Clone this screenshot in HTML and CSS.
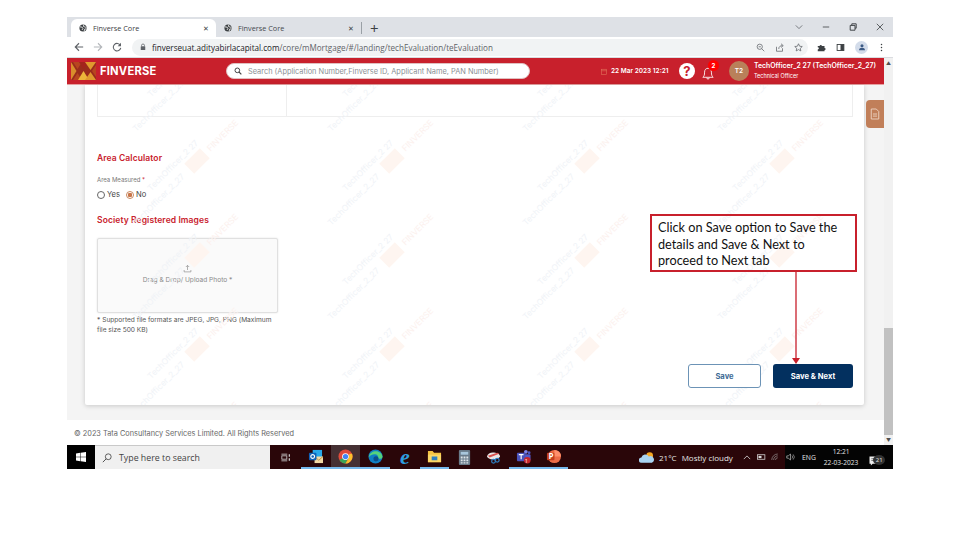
FILE: index.html
```html
<!DOCTYPE html>
<html lang="en">
<head>
    <meta charset="UTF-8">
    <title>Finverse Core</title>
    <link rel="stylesheet" href="styles.css">
</head>
<body>
    <div class="screen">
        <div class="tabstrip">
            <div class="tab active">
                <svg class="globe" viewBox="0 0 10 10"><circle cx="5" cy="5" r="4.5" fill="#3c4043"/><path d="M1 3.5 4 4l1 2-1.5 1.5M6 1l-.5 2 2.5 1 1 0M6.5 9 7 6.5l2-.5" fill="none" stroke="#fff" stroke-width="1"/></svg>
                <span class="tab-title">Finverse Core</span>
                <span class="tab-close">&#10005;</span>
            </div>
            <div class="tab">
                <svg class="globe" viewBox="0 0 10 10"><circle cx="5" cy="5" r="4.5" fill="#3c4043"/><path d="M1 3.5 4 4l1 2-1.5 1.5M6 1l-.5 2 2.5 1 1 0M6.5 9 7 6.5l2-.5" fill="none" stroke="#fff" stroke-width="1"/></svg>
                <span class="tab-title">Finverse Core</span>
                <span class="tab-close">&#10005;</span>
            </div>
            <span class="tab-new">+</span>
            <div class="win-controls">
                <svg viewBox="0 0 10 10"><path d="M1 3l4 4 4-4" fill="none" stroke="#5f6368" stroke-width="1"/></svg>
                <svg viewBox="0 0 10 10"><path d="M1 5h8" stroke="#3c4043" stroke-width="1"/></svg>
                <svg viewBox="0 0 10 10"><path d="M1.5 3h6v6h-6zM3.5 3V1h5.5v5.5H7.5" fill="none" stroke="#3c4043" stroke-width="1.2"/></svg>
                <svg viewBox="0 0 10 10"><path d="M1 1l8 8M9 1l-8 8" stroke="#3c4043" stroke-width="1"/></svg>
            </div>
        </div>

        <div class="toolbar">
            <div class="nav-btns">
                <svg viewBox="0 0 12 12"><path d="M11 6H2M6 1.5 1.5 6 6 10.5" fill="none" stroke="#5f6368" stroke-width="1.3"/></svg>
                <svg viewBox="0 0 12 12"><path d="M1 6h9M6 1.5 10.5 6 6 10.5" fill="none" stroke="#b4b7bb" stroke-width="1.3"/></svg>
                <svg viewBox="0 0 12 12"><path d="M10 4a4.5 4.5 0 1 0 .5 3" fill="none" stroke="#5f6368" stroke-width="1.3"/><path d="M10.8 1v4h-4z" fill="#5f6368"/></svg>
            </div>
            <div class="omnibox">
                <svg class="lock" viewBox="0 0 8 10"><path d="M2 4V3a2 2 0 0 1 4 0v1" fill="none" stroke="#5f6368"/><rect x="1" y="4" width="6" height="5" rx=".5" fill="#5f6368"/></svg>
                <span class="url"><b>finverseuat.adityabirlacapital.com</b>/core/mMortgage/#/landing/techEvaluation/teEvaluation</span>
                <div class="omni-icons">
                    <svg viewBox="0 0 12 12"><circle cx="5" cy="5" r="3.5" fill="none" stroke="#5f6368"/><path d="M7.5 7.5 11 11M3.5 5h3" stroke="#5f6368"/></svg>
                    <svg viewBox="0 0 12 12"><path d="M2 5v6h8V7M5 8c0-3 2-4.5 5-4.5M8 1l3 2.5L8 6" fill="none" stroke="#5f6368"/></svg>
                    <svg viewBox="0 0 12 12"><path d="M6 1l1.5 3.3 3.5.4-2.6 2.4.7 3.5L6 8.8l-3.1 1.8.7-3.5L1 4.7l3.5-.4z" fill="none" stroke="#5f6368"/></svg>
                </div>
            </div>
            <div class="chrome-icons">
                <svg viewBox="0 0 12 12"><path d="M1 4h2.5a1.500 1.500 0 0 1 3 0H10v2.500a1.500 1.500 0 0 1 0 3V11H1V8.500a1.500 1.500 0 0 0 0-3z" fill="#3c4043"/></svg>
                <svg viewBox="0 0 12 12"><rect x="1.5" y="2" width="9" height="8" fill="none" stroke="#3c4043" stroke-width="1.2"/><rect x="6" y="2" width="4.5" height="8" fill="#3c4043"/></svg>
                <span class="profile"><svg viewBox="0 0 12 12"><circle cx="6" cy="4" r="2.3" fill="#3c5a84"/><path d="M1.5 11c0-3 2-4 4.5-4s4.5 1 4.5 4z" fill="#3c5a84"/></svg></span>
                <svg viewBox="0 0 12 12"><circle cx="6" cy="2" r="1" fill="#3c4043"/><circle cx="6" cy="6" r="1" fill="#3c4043"/><circle cx="6" cy="10" r="1" fill="#3c4043"/></svg>
            </div>
        </div>

        <div class="app">
            <div class="app-main">
                <header class="apphead">
                    <div class="brand">
                        <svg class="brand-logo" viewBox="0 0 25 18"><rect width="25" height="18" fill="#9a2c1c"/><path d="M0 0 5.5 9 0 18z" fill="#d98e2c"/><path d="M2 0h9L6.5 7zM2 18h9l-4.5-7z" fill="#b8451f"/><path d="M7 18l5.5-9 5.500 9z" fill="#ecb63a"/><path d="M8 0h9l-4.500 7z" fill="#a3241d"/><path d="M14 0h11l-5.500 8zM14 18h11l-5.500-8z" fill="#e0992e"/><path d="M25 3v12l-4-6z" fill="#b8451f"/></svg>
                        <span class="brand-name">FINVERSE</span>
                    </div>
                    <div class="search">
                        <svg viewBox="0 0 12 12"><circle cx="5" cy="5" r="3.5" fill="none" stroke="#444" stroke-width="1.5"/><path d="M7.5 7.5 11 11" stroke="#444" stroke-width="1.7"/></svg>
                        <span>Search (Application Number,Finverse ID, Applicant Name, PAN Number)</span>
                    </div>
                    <div class="head-date">
                        <svg viewBox="0 0 8 9"><rect x=".5" y="1.5" width="7" height="7" fill="none" stroke="#e2725b" stroke-width=".8"/><path d="M.5 3.5h7" stroke="#e2725b" stroke-width=".8"/></svg>
                        <span>22 Mar 2023 12:21</span>
                    </div>
                    <span class="help">?</span>
                    <div class="bell">
                        <svg viewBox="0 0 14 16"><path d="M1 13c1.5-1.500 2-2.500 2-6 0-3 1.800-4.500 4-4.500S11 4 11 7c0 3.500.5 4.500 2 6zM5.500 13.500a1.500 1.500 0 0 0 3 0" fill="none" stroke="#fff" stroke-width="1"/></svg>
                        <span class="badge">2</span>
                    </div>
                    <span class="avatar">T2</span>
                    <div class="user">
                        <div class="user-name">TechOfficer_2 27 (TechOfficer_2_27)</div>
                        <div class="user-role">Technical Officer</div>
                    </div>
                </header>

                <div class="content">
                    <div class="card">
                        <div class="wm-layer">
                            <div class="wm-cell"><div class="wm"><span class="wm-one">TechOfficer_2 27</span><div class="wm-two"><span>TechOfficer_2_27</span><i></i><em>FINVERSE</em></div></div></div>
                            <div class="wm-cell"><div class="wm"><span class="wm-one">TechOfficer_2 27</span><div class="wm-two"><span>TechOfficer_2_27</span><i></i><em>FINVERSE</em></div></div></div>
                            <div class="wm-cell"><div class="wm"><span class="wm-one">TechOfficer_2 27</span><div class="wm-two"><span>TechOfficer_2_27</span><i></i><em>FINVERSE</em></div></div></div>
                            <div class="wm-cell"><div class="wm"><span class="wm-one">TechOfficer_2 27</span><div class="wm-two"><span>TechOfficer_2_27</span><i></i><em>FINVERSE</em></div></div></div>
                            <div class="wm-cell"><div class="wm"><span class="wm-one">TechOfficer_2 27</span><div class="wm-two"><span>TechOfficer_2_27</span><i></i><em>FINVERSE</em></div></div></div>
                            <div class="wm-cell"><div class="wm"><span class="wm-one">TechOfficer_2 27</span><div class="wm-two"><span>TechOfficer_2_27</span><i></i><em>FINVERSE</em></div></div></div>
                            <div class="wm-cell"><div class="wm"><span class="wm-one">TechOfficer_2 27</span><div class="wm-two"><span>TechOfficer_2_27</span><i></i><em>FINVERSE</em></div></div></div>
                            <div class="wm-cell"><div class="wm"><span class="wm-one">TechOfficer_2 27</span><div class="wm-two"><span>TechOfficer_2_27</span><i></i><em>FINVERSE</em></div></div></div>
                            <div class="wm-cell"><div class="wm"><span class="wm-one">TechOfficer_2 27</span><div class="wm-two"><span>TechOfficer_2_27</span><i></i><em>FINVERSE</em></div></div></div>
                            <div class="wm-cell"><div class="wm"><span class="wm-one">TechOfficer_2 27</span><div class="wm-two"><span>TechOfficer_2_27</span><i></i><em>FINVERSE</em></div></div></div>
                            <div class="wm-cell"><div class="wm"><span class="wm-one">TechOfficer_2 27</span><div class="wm-two"><span>TechOfficer_2_27</span><i></i><em>FINVERSE</em></div></div></div>
                            <div class="wm-cell"><div class="wm"><span class="wm-one">TechOfficer_2 27</span><div class="wm-two"><span>TechOfficer_2_27</span><i></i><em>FINVERSE</em></div></div></div>
                            <div class="wm-cell"><div class="wm"><span class="wm-one">TechOfficer_2 27</span><div class="wm-two"><span>TechOfficer_2_27</span><i></i><em>FINVERSE</em></div></div></div>
                            <div class="wm-cell"><div class="wm"><span class="wm-one">TechOfficer_2 27</span><div class="wm-two"><span>TechOfficer_2_27</span><i></i><em>FINVERSE</em></div></div></div>
                            <div class="wm-cell"><div class="wm"><span class="wm-one">TechOfficer_2 27</span><div class="wm-two"><span>TechOfficer_2_27</span><i></i><em>FINVERSE</em></div></div></div>
                            <div class="wm-cell"><div class="wm"><span class="wm-one">TechOfficer_2 27</span><div class="wm-two"><span>TechOfficer_2_27</span><i></i><em>FINVERSE</em></div></div></div>
                            <div class="wm-cell"><div class="wm"><span class="wm-one">TechOfficer_2 27</span><div class="wm-two"><span>TechOfficer_2_27</span><i></i><em>FINVERSE</em></div></div></div>
                            <div class="wm-cell"><div class="wm"><span class="wm-one">TechOfficer_2 27</span><div class="wm-two"><span>TechOfficer_2_27</span><i></i><em>FINVERSE</em></div></div></div>
                            <div class="wm-cell"><div class="wm"><span class="wm-one">TechOfficer_2 27</span><div class="wm-two"><span>TechOfficer_2_27</span><i></i><em>FINVERSE</em></div></div></div>
                            <div class="wm-cell"><div class="wm"><span class="wm-one">TechOfficer_2 27</span><div class="wm-two"><span>TechOfficer_2_27</span><i></i><em>FINVERSE</em></div></div></div>
                        </div>

                        <div class="top-table"><div class="top-cell"></div></div>

                        <h3 class="section-title area-title">Area Calculator</h3>
                        <div class="field-label">Area Measured <span class="req">*</span></div>
                        <div class="radios">
                            <label><span class="radio"></span>Yes</label>
                            <label><span class="radio checked"></span>No</label>
                        </div>

                        <h3 class="section-title images-title">Society Registered Images</h3>
                        <div class="upload">
                            <svg viewBox="0 0 12 12"><path d="M1.5 8v2.5h9V8M6 8V2M3.8 4 6 1.8 8.2 4" fill="none" stroke="#8a8a8a" stroke-width=".9"/></svg>
                            <span>Drag &amp; Drop/ Upload Photo *</span>
                        </div>
                        <p class="upload-note">* Supported file formats are JPEG, JPG, PNG (Maximum file size 500 KB)</p>

                        <div class="actions">
                            <button class="btn btn-save">Save</button>
                            <button class="btn btn-next">Save &amp; Next</button>
                        </div>
                    </div>
                </div>

                <footer class="app-foot">© 2023 Tata Consultancy Services Limited. All Rights Reserved</footer>

                <div class="side-tab">
                    <svg viewBox="0 0 12 14"><path d="M1.5 1h6l3 3v9h-9z" fill="none" stroke="#f0dccd" stroke-width="1"/><path d="M3.5 7h5M3.5 9.5h5" stroke="#f0dccd" stroke-width="1"/></svg>
                </div>

                <div class="callout">Click on Save option to Save the details and Save &amp; Next to proceed to Next tab</div>
                <svg class="callout-arrow" viewBox="0 0 8 92"><path d="M4 0v86" stroke="#c8202c" stroke-width="1.3"/><path d="M0 86h8l-4 6z" fill="#c8202c"/></svg>
            </div>

            <div class="scrollbar">
                <span class="scroll-arrow">&#9650;</span>
                <div class="scroll-thumb"></div>
                <span class="scroll-arrow">&#9660;</span>
            </div>
        </div>

        <div class="taskbar">
            <div class="start"><svg viewBox="0 0 10 10"><path d="M0 1.4 4.3.8v3.9H0zM4.8.7 10 0v4.7H4.8zM0 5.3h4.3v3.9L0 8.6zM4.8 5.3H10V10l-5.2-.7z" fill="#fff"/></svg></div>
            <div class="task-search">
                <svg viewBox="0 0 12 12"><circle cx="7.5" cy="4.5" r="3.5" fill="none" stroke="#333" stroke-width=".9"/><path d="M5 7 1 11" stroke="#333" stroke-width="1"/></svg>
                <span>Type here to search</span>
            </div>
            <div class="task-view"><svg viewBox="0 0 12 10"><path d="M.5 1h7M.5 9h7" stroke="#ccc"/><rect x="1" y="3" width="6" height="4" fill="none" stroke="#ccc"/><path d="M10 1v3M10 6v3" stroke="#ccc" stroke-width="1.5"/></svg></div>
            <div class="task-apps">
                <div class="app-slot open"><svg viewBox="0 0 16 16"><rect x="5" y="1" width="10" height="9" fill="#28a8ea"/><rect x="7" y="8" width="9" height="7" fill="#f3d9a4"/><path d="M7 8l4.5 4L16 8" fill="none" stroke="#b98a3e"/><rect x="1" y="4" width="8" height="8" rx="1" fill="#0f5fb4"/><circle cx="5" cy="8" r="2" fill="none" stroke="#fff" stroke-width="1.2"/></svg></div>
                <div class="app-slot open current"><svg viewBox="0 0 16 16"><circle cx="8" cy="8" r="7.5" fill="#e04a3a"/><path d="M8 8 1.5 11.8A7.5 7.5 0 0 0 8 15.5L12 8z" fill="#3aa757"/><path d="M12 5h2.9A7.5 7.5 0 0 1 8 15.5L11.3 10z" fill="#fbc02d"/><circle cx="8" cy="8" r="3.6" fill="#fff"/><circle cx="8" cy="8" r="2.8" fill="#4285f4"/></svg></div>
                <div class="app-slot open"><svg viewBox="0 0 16 16"><circle cx="8" cy="8" r="7.5" fill="#0f7fc4"/><path d="M.8 9C1.5 4.5 5 2.5 8.5 2.5c3.500 0 6.500 2.500 7 5.500 0 2-1.700 2.500-3 2.500-1 0-1.500-.5-1.500-1C11 7 9.500 5.500 7.500 5.500 4 5.500 1.500 7 .8 9z" fill="#55d27c"/><circle cx="8.5" cy="10.5" r="2.7" fill="#0b4f8c"/></svg></div>
                <div class="app-slot"><span class="ie-glyph">e</span></div>
                <div class="app-slot open"><svg viewBox="0 0 16 14"><path d="M1 1h5l1.5 2H15v10H1z" fill="#f5c242"/><rect x="1" y="5" width="14" height="8" fill="#fbd767"/><rect x="5" y="7" width="6" height="4" fill="#2f7fc1"/></svg></div>
                <div class="app-slot"><svg viewBox="0 0 12 16"><rect width="12" height="16" rx="1" fill="#6a7b8a"/><rect x="2" y="2" width="8" height="3" fill="#a9c7dc"/><path d="M2 7h2v2H2zM5 7h2v2H5zM8 7h2v2H8zM2 10h2v2H2zM5 10h2v2H5zM8 10h2v2H8zM2 13h2v1.5H2zM5 13h2v1.5H5zM8 13h2v1.5H8z" fill="#dfe6ea"/></svg></div>
                <div class="app-slot"><svg viewBox="0 0 16 14"><path d="M1 6c1-4 5-5 9-4 3 .5 5 2 5 4-1 2-5 3-8 3-3 0-5-1-6-3z" fill="#e8e8e8"/><path d="M2 5 12 2l2 1L4 7z" fill="#d9534f"/><circle cx="8" cy="11" r="2" fill="none" stroke="#2f7fc1" stroke-width="1.3"/><circle cx="12" cy="10" r="2" fill="none" stroke="#2f7fc1" stroke-width="1.3"/></svg></div>
                <div class="app-slot open"><svg viewBox="0 0 16 16"><circle cx="10.5" cy="3" r="2" fill="#7b83eb"/><circle cx="14" cy="4" r="1.5" fill="#5059c9"/><rect x="7" y="5.5" width="8.5" height="7" rx="1.5" fill="#5059c9"/><rect x="1" y="4" width="9" height="9" rx="1" fill="#4b53bc"/><path d="M3 6h5M5.5 6v5" stroke="#fff" stroke-width="1.2"/><circle cx="12" cy="12" r="3.5" fill="#c4262e"/></svg><span class="teams-count">1</span></div>
                <div class="app-slot open"><svg viewBox="0 0 16 16"><circle cx="9" cy="8" r="7" fill="#ed6c47"/><path d="M9 1a7 7 0 0 1 7 7H9z" fill="#ff8f6b"/><rect x="1" y="4" width="8" height="8" rx="1" fill="#c43e1c"/></svg><span class="ppt-letter">P</span></div>
            </div>
            <div class="weather">
                <svg viewBox="0 0 18 14"><circle cx="12" cy="5" r="3.8" fill="#f5a623"/><path d="M3 13a3 3 0 0 1-.3-6 4.5 4.5 0 0 1 8.300-1.200A3.600 3.600 0 0 1 14.500 13z" fill="#a9d3f2"/></svg>
                <span>21°C</span>
                <span class="weather-text">Mostly cloudy</span>
            </div>
            <div class="tray">
                <svg class="tray-up" viewBox="0 0 10 6"><path d="M1 5l4-4 4 4" fill="none" stroke="#ddd"/></svg>
                <svg class="tray-icon" viewBox="0 0 12 8"><rect x=".5" y="1" width="10" height="6" fill="none" stroke="#ddd"/><rect x="2" y="2.5" width="4" height="3" fill="#ddd"/></svg>
                <svg class="tray-icon" viewBox="0 0 12 10"><path d="M1 9a8 8 0 0 1 8-8M3.5 9A5.5 5.5 0 0 1 9 3.5M6 9a3 3 0 0 1 3-3" fill="none" stroke="#aaa" stroke-width=".8"/></svg>
                <div class="tray-dark">
                    <svg class="tray-icon" viewBox="0 0 12 10"><path d="M1 3.5h2L6 1v8L3 6.5H1z" fill="none" stroke="#ddd" stroke-width=".8"/><path d="M8 3a3 3 0 0 1 0 4M9.5 1.5a5 5 0 0 1 0 7" fill="none" stroke="#ddd" stroke-width=".7"/></svg>
                    <span class="lang">ENG</span>
                    <div class="clock"><span>12:21</span><span>22-03-2023</span></div>
                    <div class="notify">
                        <svg viewBox="0 0 12 11"><path d="M.5.5h11v8H4L2 10.5v-2H.5z" fill="#eee"/><path d="M2.500 3h7M2.500 5h7" stroke="#333" stroke-width=".7"/></svg>
                        <span class="notify-count">21</span>
                    </div>
                </div>
            </div>
        </div>
    </div>
</body>
</html>
```

FILE: styles.css
```css
* {
    margin: 0;
    padding: 0;
    box-sizing: border-box;
}

body {
    background: #fff;
    font-family: 'Inter', sans-serif;
    padding: 17px 67px;
    height: 540px;
    overflow: hidden;
}

.screen {
    width: 826px;
    height: 452px;
    display: flex;
    flex-direction: column;
    position: relative;
}

/* Browser chrome */
.tabstrip {
    height: 20px;
    background: #dee1e6;
    display: flex;
    align-items: flex-end;
    padding-left: 4px;
    font-family: 'Open Sans', sans-serif;
}

.tab {
    width: 145px;
    height: 18px;
    display: flex;
    align-items: center;
    padding: 0 7px 0 8px;
    color: #45494e;
    font-size: 7.3px;
    border-radius: 6px 6px 0 0;
}

.tab.active {
    background: #fff;
    color: #3c4043;
}

.globe {
    width: 8px;
    height: 8px;
    margin-right: 6px;
}

.tab-title {
    flex: 1;
}

.tab-close {
    font-size: 7px;
    color: #3c4043;
}

.tab-new {
    font-size: 15px;
    line-height: 18px;
    color: #3c4043;
    border-left: 1px solid #9aa0a6;
    height: 12px;
    display: flex;
    align-items: center;
    padding-left: 8px;
    margin-bottom: 3px;
}

.win-controls {
    margin-left: auto;
    display: flex;
    align-self: center;
    gap: 19px;
    padding-right: 9px;
}

.win-controls svg {
    width: 8px;
    height: 8px;
}

.toolbar {
    height: 21px;
    background: #fff;
    display: flex;
    align-items: center;
    padding-left: 7px;
    border-bottom: 1px solid #dadce0;
}

.nav-btns {
    display: flex;
    gap: 9px;
    width: 58px;
}

.nav-btns svg {
    width: 10px;
    height: 10px;
}

.omnibox {
    width: 676px;
    height: 17px;
    background: #f1f3f4;
    border-radius: 9px;
    display: flex;
    align-items: center;
    padding: 0 5px 0 8px;
}

.lock {
    width: 6px;
    height: 8px;
    margin-right: 6px;
}

.url {
    font-family: 'Open Sans', sans-serif;
    font-size: 8.1px;
    color: #5f6368;
}

.url b {
    font-weight: 400;
    color: #202124;
}

.omni-icons {
    margin-left: auto;
    display: flex;
    gap: 10px;
}

.omni-icons svg {
    width: 9px;
    height: 9px;
}

.chrome-icons {
    display: flex;
    align-items: center;
    margin-left: 9px;
}

.chrome-icons > svg {
    width: 9px;
    height: 9px;
    margin-right: 10px;
}

.chrome-icons > svg:last-child {
    margin: 0 0 0 9px;
}

.profile {
    width: 13px;
    height: 13px;
    border-radius: 50%;
    background: #d3dcea;
    display: flex;
    align-items: center;
    justify-content: center;
}

.profile svg {
    width: 8px;
    height: 8px;
}

/* App */
.app {
    height: 387px;
    display: flex;
}

.app-main {
    width: 817px;
    display: flex;
    flex-direction: column;
    position: relative;
}

.apphead {
    height: 27px;
    background: #c8202c;
    display: flex;
    align-items: center;
    color: #fff;
    padding-left: 4px;
    border-bottom: 1px solid #e5a0a0;
    flex-shrink: 0;
}

.brand {
    display: flex;
    align-items: center;
    width: 155px;
}

.brand-logo {
    width: 25px;
    height: 18px;
    margin-right: 4px;
}

.brand-name {
    font-size: 11.2px;
    font-weight: 700;
    letter-spacing: .2px;
}

.search {
    width: 304px;
    height: 16px;
    background: #fff;
    border-radius: 8px;
    display: flex;
    align-items: center;
    padding-left: 7px;
    color: #8a8f94;
    font-size: 7.4px;
    white-space: nowrap;
    border: 1px solid #e0c0c0;
}

.search svg {
    width: 8px;
    height: 8px;
    margin-right: 6px;
}

.head-date {
    margin-left: 71px;
    display: flex;
    align-items: center;
    width: 69px;
    font-size: 6.5px;
    font-weight: 600;
    white-space: nowrap;
}

.head-date svg {
    width: 6px;
    height: 7px;
    margin-right: 4px;
}

.help {
    width: 16px;
    height: 16px;
    background: #fff;
    border-radius: 50%;
    color: #c8202c;
    font-size: 13px;
    font-weight: 700;
    display: flex;
    align-items: center;
    justify-content: center;
    margin-left: 9px;
}

.bell {
    position: relative;
    margin-left: 7px;
    width: 14px;
    height: 16px;
}

.bell svg {
    width: 12px;
    height: 14px;
    margin-top: 3px;
}

.badge {
    position: absolute;
    top: -3px;
    left: 6px;
    width: 11px;
    height: 11px;
    background: #f00;
    border-radius: 50%;
    font-size: 6px;
    font-weight: 700;
    display: flex;
    align-items: center;
    justify-content: center;
}

.avatar {
    width: 20px;
    height: 20px;
    margin-left: 13px;
    background: #b9805a;
    border-radius: 50%;
    font-size: 6.5px;
    font-weight: 600;
    display: flex;
    align-items: center;
    justify-content: center;
}

.user {
    margin-left: 5px;
    white-space: nowrap;
}

.user-name {
    font-size: 6.9px;
    font-weight: 600;
    line-height: 10px;
}

.user-role {
    font-size: 5.5px;
    line-height: 9px;
    margin-top: 1px;
}

.content {
    flex: 1;
    background: #f4f4f4;
    padding: 0 20px 0 18px;
    min-height: 0;
}

.card {
    height: 320px;
    background: #fff;
    box-shadow: 0 1px 5px rgba(0, 0, 0, .18);
    border-radius: 0 0 2px 2px;
    padding: 0 11px 0 12px;
    position: relative;
    overflow: hidden;
}

/* Watermark lies over the card */
.wm-layer {
    position: absolute;
    left: 14px;
    top: -65px;
    display: grid;
    grid-template-columns: repeat(4, 195px);
    grid-auto-rows: 94px;
    pointer-events: none;
}

.wm-cell {
    display: flex;
    align-items: center;
    justify-content: center;
}

.wm {
    flex: 0 0 178px;
    height: 42px;
    transform: rotate(-45deg);
    white-space: nowrap;
    font-size: 8.4px;
    line-height: 14px;
    color: #f0f3f7;
}

.wm-one {
    display: block;
    padding-left: 35px;
    height: 14px;
}

.wm-two {
    display: flex;
    align-items: center;
    height: 14px;
}

.wm-two span {
    flex: 0 0 75px;
}

.wm-two i {
    width: 22px;
    height: 14px;
    margin-left: 3px;
    background: #fef5f0;
    flex-shrink: 0;
}

.wm-two em {
    font-style: normal;
    color: #fcf1ee;
    margin-left: 5px;
}

.top-table {
    height: 32px;
    border: 1px solid #eee;
    border-top: 0;
    padding-left: 188px;
}

.top-cell {
    height: 100%;
    border-left: 1px solid #eee;
}

.section-title {
    font-size: 8.5px;
    font-weight: 600;
    color: #c8202c;
    letter-spacing: .1px;
    line-height: 12px;
}

.area-title {
    margin-top: 35px;
}

.field-label {
    font-size: 6px;
    color: #777;
    line-height: 8px;
    margin-top: 12px;
}

.req {
    color: #c8202c;
}

.radios {
    display: flex;
    gap: 6px;
    margin-top: 6px;
    font-size: 7.6px;
    color: #444;
}

.radios label {
    display: flex;
    align-items: center;
    line-height: 10px;
}

.radio {
    width: 8px;
    height: 8px;
    border: 1px solid #666;
    border-radius: 50%;
    margin-right: 2px;
    background: #fff;
}

.radio.checked {
    border-color: #c8885f;
    background: radial-gradient(circle, #c8764a 0 2px, #fff 2.5px);
}

.images-title {
    margin-top: 14px;
}

.upload {
    width: 181px;
    height: 75px;
    margin-top: 12px;
    background: #fafafa;
    border: 1px solid #e0e0e0;
    border-radius: 2px;
    box-shadow: 0 0 2px rgba(0, 0, 0, .12);
    display: flex;
    flex-direction: column;
    align-items: center;
    padding-top: 25px;
    font-size: 6.6px;
    color: #8a8a8a;
}

.upload svg {
    width: 9px;
    height: 9px;
    margin-bottom: 3px;
}

.upload-note {
    width: 180px;
    margin-top: 2px;
    font-size: 6.6px;
    line-height: 10px;
    color: #555;
}

.actions {
    position: absolute;
    right: 11px;
    top: 279px;
    display: flex;
    gap: 12px;
}

.btn {
    height: 24px;
    border-radius: 3px;
    font-family: 'Inter', sans-serif;
    font-size: 7.6px;
    font-weight: 700;
}

.btn-save {
    width: 73px;
    background: #fff;
    border: 1px solid #6c93b6;
    color: #3d6a94;
}

.btn-next {
    width: 80px;
    background: #03305f;
    border: 0;
    color: #fff;
}

.app-foot {
    height: 25px;
    background: #fff;
    font-size: 7.35px;
    color: #666;
    padding: 9px 0 0 7px;
    line-height: 9px;
    flex-shrink: 0;
}

.side-tab {
    position: absolute;
    left: 799px;
    top: 42px;
    width: 18px;
    height: 28px;
    background: #c17f59;
    border-radius: 4px 0 0 4px;
    display: flex;
    align-items: center;
    justify-content: center;
}

.side-tab svg {
    width: 10px;
    height: 12px;
}

/* Annotation drawn over the page */
.callout {
    position: absolute;
    left: 583px;
    top: 156px;
    width: 207px;
    height: 58px;
    border: 2px solid #c8202c;
    padding: 3px 6px;
    font-family: 'Lato', sans-serif;
    font-size: 12.7px;
    line-height: 16.5px;
    color: #111;
}

.callout-arrow {
    position: absolute;
    left: 725px;
    top: 214px;
    width: 8px;
    height: 92px;
}

.scrollbar {
    width: 9px;
    background: #f1f1f1;
    display: flex;
    flex-direction: column;
    align-items: center;
    justify-content: space-between;
}

.scroll-arrow {
    font-size: 5px;
    line-height: 10px;
    color: #505050;
}

.scroll-thumb {
    width: 9px;
    height: 107px;
    background: #c1c1c1;
    margin-top: auto;
}

/* Windows taskbar */
.taskbar {
    height: 24px;
    background: #2a0609;
    display: flex;
    align-items: stretch;
    font-family: 'Open Sans', sans-serif;
    color: #e6e6e6;
}

.start {
    width: 28px;
    background: #000;
    display: flex;
    align-items: center;
    justify-content: center;
}

.start svg {
    width: 10px;
    height: 10px;
}

.task-search {
    width: 175px;
    background: #f0f0f0;
    border-top: 1px solid #c9c9c9;
    display: flex;
    align-items: center;
    padding-left: 7px;
    color: #444;
    font-size: 8.8px;
}

.task-search svg {
    width: 10px;
    height: 10px;
    margin-right: 7px;
}

.task-view {
    width: 31px;
    display: flex;
    align-items: center;
    justify-content: center;
}

.task-view svg {
    width: 10px;
    height: 9px;
}

.task-apps {
    display: flex;
    width: 267px;
}

.app-slot {
    width: 29.7px;
    display: flex;
    align-items: center;
    justify-content: center;
    position: relative;
}

.app-slot svg {
    width: 15px;
    height: 15px;
}

.app-slot.open {
    border-bottom: 2px solid #76b9ed;
}

.app-slot.current {
    background-color: #453033;
}

.ie-glyph {
    font-family: 'Liberation Serif', serif;
    font-size: 22px;
    line-height: 20px;
    font-style: italic;
    font-weight: 700;
    color: #2d9fe0;
}

.teams-count {
    position: absolute;
    left: 16px;
    top: 12px;
    font-size: 5.5px;
    color: #fff;
}

.ppt-letter {
    position: absolute;
    left: 10px;
    top: 5px;
    font-size: 8px;
    font-weight: 700;
    color: #fff;
}

.weather {
    width: 101px;
    margin-left: 71px;
    display: flex;
    align-items: center;
    font-size: 8px;
    white-space: nowrap;
}

.weather svg {
    width: 16px;
    height: 13px;
    margin-right: 4px;
}

.weather-text {
    margin-left: 5px;
}

.tray {
    flex: 1;
    display: flex;
    align-items: center;
}

.tray-up {
    width: 8px;
    height: 5px;
    margin: 0 6px 0 3px;
    flex-shrink: 0;
}

.tray-icon {
    width: 9px;
    height: 8px;
    margin-right: 5px;
    flex-shrink: 0;
}

.tray-dark {
    flex: 1;
    align-self: stretch;
    background: #040404;
    display: flex;
    align-items: center;
    padding-left: 1px;
}

.lang {
    font-size: 6.8px;
    margin-left: 2px;
}

.clock {
    display: flex;
    flex-direction: column;
    align-items: center;
    font-size: 6.6px;
    line-height: 11px;
    margin-left: 8px;
    white-space: nowrap;
}

.notify {
    margin-left: 11px;
    width: 16px;
    height: 16px;
    position: relative;
}

.notify svg {
    width: 11px;
    height: 10px;
}

.notify-count {
    position: absolute;
    left: 4px;
    top: 6px;
    width: 12px;
    height: 10px;
    background: #333;
    border-radius: 50%;
    font-size: 6px;
    line-height: 10px;
    text-align: center;
}
```
